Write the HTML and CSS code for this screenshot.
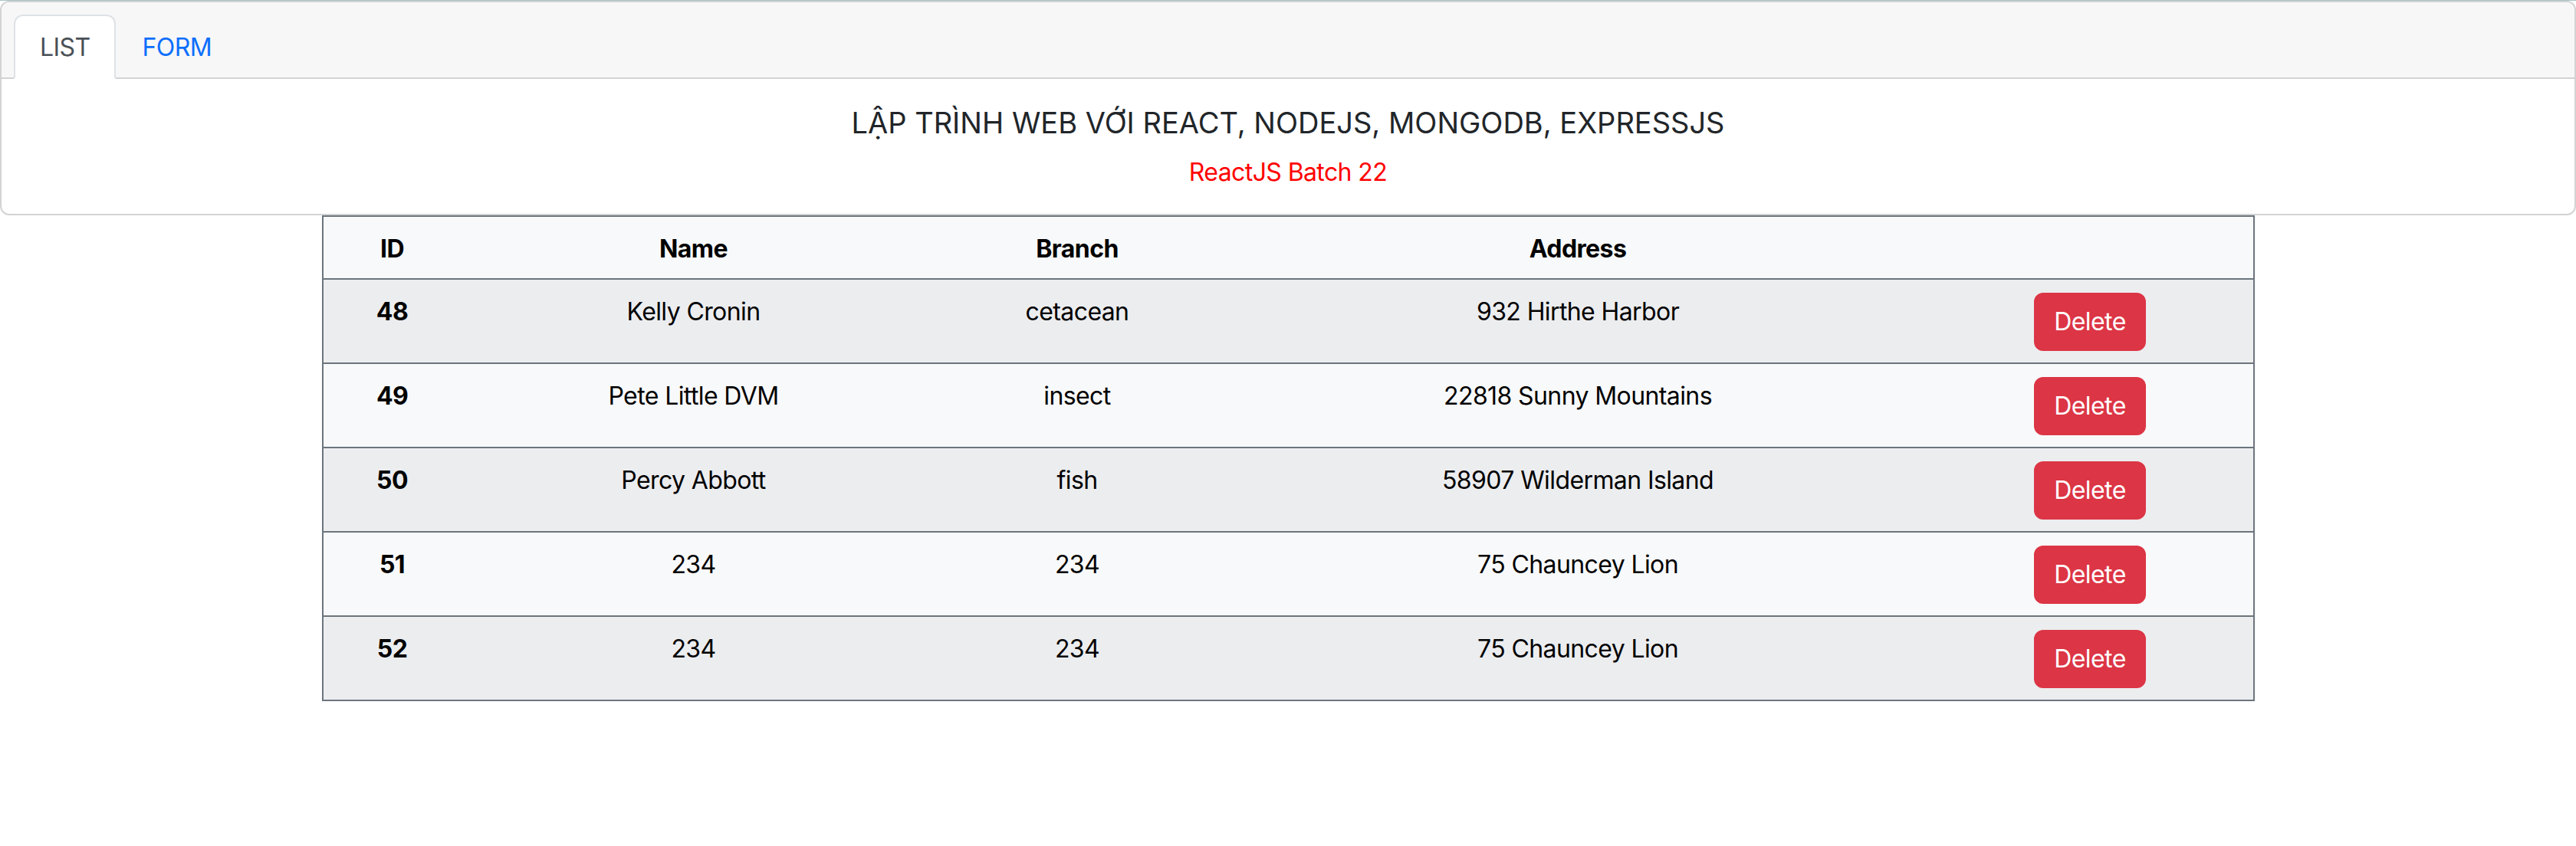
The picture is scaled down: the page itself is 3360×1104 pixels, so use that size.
FILE: index.html
```html
<!DOCTYPE html>
<html lang="vi">
<head>
<meta charset="utf-8">
<title>Student list</title>
<link rel="stylesheet" href="styles.css">
</head>
<body class="page">
<div class="topline"></div>
<div class="card">
  <div class="card-header">
    <ul class="tabs">
      <li class="tab tab-active">LIST</li>
      <li class="tab tab-link">FORM</li>
    </ul>
  </div>
  <div class="card-body">
    <h5 class="title">LẬP TRÌNH WEB VỚI REACT, NODEJS, MONGODB, EXPRESSJS</h5>
    <p class="subtitle">ReactJS Batch 22</p>
  </div>
</div>
<table class="grid">
  <colgroup>
    <col class="c-id"><col class="c-name"><col class="c-branch"><col class="c-addr"><col class="c-act">
  </colgroup>
  <thead>
    <tr class="row-head"><th>ID</th><th>Name</th><th>Branch</th><th>Address</th><th></th></tr>
  </thead>
  <tbody>
    <tr class="row-odd"><th>48</th><td>Kelly Cronin</td><td>cetacean</td><td>932 Hirthe Harbor</td><td class="act"><button class="btn-del">Delete</button></td></tr>
    <tr class="row-even"><th>49</th><td>Pete Little DVM</td><td>insect</td><td>22818 Sunny Mountains</td><td class="act"><button class="btn-del">Delete</button></td></tr>
    <tr class="row-odd"><th>50</th><td>Percy Abbott</td><td>fish</td><td>58907 Wilderman Island</td><td class="act"><button class="btn-del">Delete</button></td></tr>
    <tr class="row-even"><th>51</th><td>234</td><td>234</td><td>75 Chauncey Lion</td><td class="act"><button class="btn-del">Delete</button></td></tr>
    <tr class="row-odd"><th>52</th><td>234</td><td>234</td><td>75 Chauncey Lion</td><td class="act"><button class="btn-del">Delete</button></td></tr>
  </tbody>
</table>
</body>
</html>
```
FILE: styles.css
```css
* { box-sizing: border-box; }
.page {
  margin: 0;
  font-family: Inter, "Liberation Sans", Arial, sans-serif;
  font-size: 32px;
  line-height: 48px;
  color: #212529;
  background: #fff;
  letter-spacing: -0.6px;
}
.topline { height: 1px; background: #a6c4c6; }
.card {
  border: 2px solid #d3d3d3;
  border-radius: 12px;
  background: #fff;
}
.card-header {
  background: #f7f7f7;
  border-bottom: 2px solid #d3d3d3;
  border-radius: 10px 10px 0 0;
  padding: 16px 16px 0 16px;
}
.tabs {
  list-style: none;
  margin: 0 0 -2px 0;
  padding: 0;
  display: flex;
}
.tab {
  padding: 17px 32px 15px;
  border: 2px solid transparent;
  border-radius: 12px 12px 0 0;
}
.tab-active {
  background: #fff;
  border-color: #dee2e6 #dee2e6 #fff;
  color: #495057;
}
.tab-link { color: #0d6efd; }
.card-body {
  padding: 32px 32px 30px;
  text-align: center;
}
.title {
  margin: 3px 0 17px;
  font-size: 38px;
  line-height: 44px;
  font-weight: 400;
  letter-spacing: 0;
}
.subtitle {
  margin: 0;
  padding-top: 2px;
  color: #ff0000;
}
.grid {
  width: 2519px;
  margin: 0 auto;
  border-collapse: collapse;
  border: 2px solid #6c757d;
  color: #000;
  text-align: center;
  table-layout: fixed;
}
.c-id { width: 181px; }
.c-name { width: 606px; }
.c-branch { width: 395px; }
.c-addr { width: 911px; }
.c-act { width: 426px; }
.grid th, .grid td {
  padding: 18px 16px 14px;
  vertical-align: top;
  border-bottom: 2px solid #6c757d;
}
.grid .act { padding: 17px 16px 15px; }
.grid th { font-weight: 700; }
.grid td { font-weight: 400; }
.row-head { background: #f8f9fa; }
.row-odd { background: #ecedef; }
.row-even { background: #f8f9fa; }
.btn-del {
  font-family: inherit;
  font-size: 32px;
  line-height: 48px;
  letter-spacing: -0.6px;
  padding: 12px 24px;
  border: 2px solid #dc3545;
  border-radius: 12px;
  background: #dc3545;
  color: #fff;
  margin: 0;
  display: inline-block;
}
```
